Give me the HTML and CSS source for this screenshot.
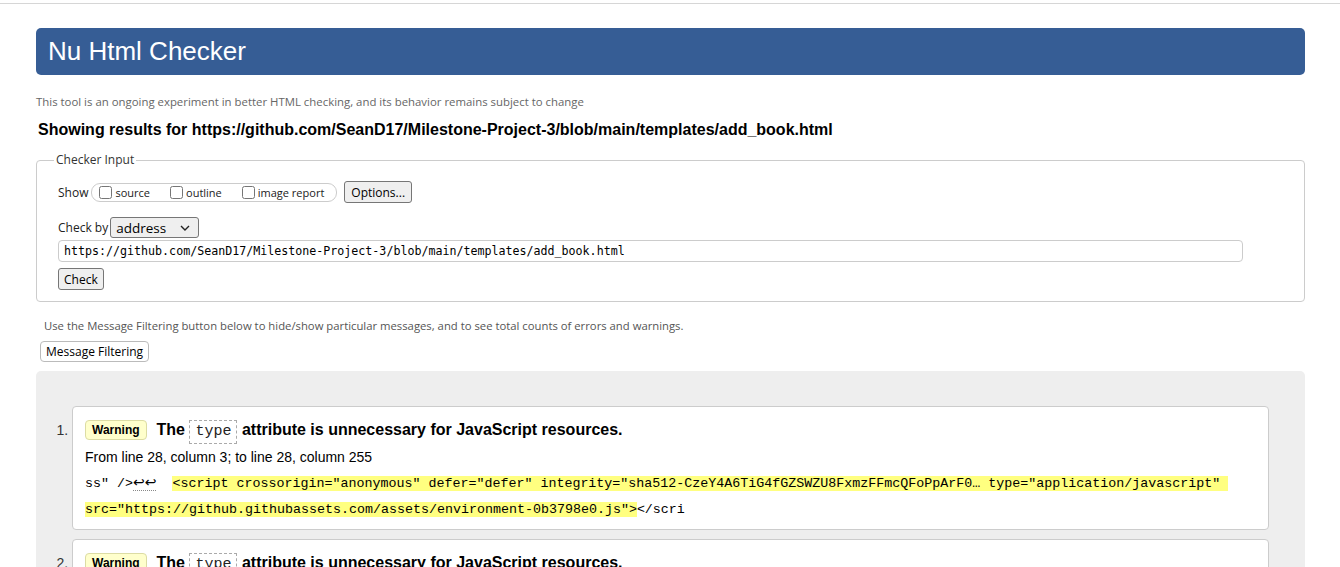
FILE: index.html
```html
<!DOCTYPE html>
<html lang="en">
<head>
<meta charset="utf-8">
<title>Showing results for https://github.com/SeanD17/Milestone-Project-3/blob/main/templates/add_book.html - Nu Html Checker</title>
<link rel="stylesheet" href="styles.css">
</head>
<body>
<div class="topline"></div>
<div class="page">
  <h1 class="title">Nu Html Checker</h1>
  <p class="about">This tool is an ongoing experiment in better HTML checking, and its behavior remains subject to change</p>
  <h2 class="results-for">Showing results for https://github.com/SeanD17/Milestone-Project-3/blob/main/templates/add_book.html</h2>
  <fieldset class="checker-input">
    <legend>Checker Input</legend>
    <div class="row show-row">
      <span class="lbl">Show</span>
      <span class="show-group">
        <label class="opt"><input type="checkbox"><span>source</span></label>
        <label class="opt"><input type="checkbox"><span>outline</span></label>
        <label class="opt"><input type="checkbox"><span>image report</span></label>
      </span>
      <button class="btn options-btn">Options...</button>
    </div>
    <div class="row checkby-row">
      <span class="lbl">Check by</span>
      <span class="select">
        <span class="select-text">address</span>
        <svg class="chev" width="10" height="6" viewBox="0 0 10 6"><path d="M1 1 L5 5 L9 1" fill="none" stroke="#222" stroke-width="1.4"/></svg>
      </span>
    </div>
    <div class="url">https://github.com/SeanD17/Milestone-Project-3/blob/main/templates/add_book.html</div>
    <button class="btn check-btn">Check</button>
  </fieldset>
  <p class="filter-hint">Use the Message Filtering button below to hide/show particular messages, and to see total counts of errors and warnings.</p>
  <button class="btn-filter">Message Filtering</button>
  <div class="results">
    <ol class="messages">
      <li class="msg">
        <p class="msg-head"><span class="badge">Warning</span><span class="msg-text">The <code class="kw">type</code> attribute is unnecessary for JavaScript resources.</span></p>
        <p class="loc">From line 28, column 3; to line 28, column 255</p>
        <p class="extract"><code>ss" /&gt;<span class="lf">↩↩</span>  <mark>&lt;script crossorigin="anonymous" defer="defer" integrity="sha512-CzeY4A6TiG4fGZSWZU8FxmzFFmcQFoPpArF0… type="application/javascript" src="https://github.githubassets.com/assets/environment-0b3798e0.js"&gt;</mark>&lt;/scri</code></p>
      </li>
      <li class="msg">
        <p class="msg-head"><span class="badge">Warning</span><span class="msg-text">The <code class="kw">type</code> attribute is unnecessary for JavaScript resources.</span></p>
        <p class="loc">From line 29, column 3; to line 29, column 249</p>
        <p class="extract"><code>s"&gt;&lt;/script&gt;<span class="lf">↩</span>  <mark>&lt;script crossorigin="anonymous" defer="defer" integrity="sha512-lbEoPNb7QHsz9Vb8RymBzQHmvqbwqH4Y… type="application/javascript" src="https://github.githubassets.com/assets/chunk-frameworks-2f1c9f55.js"&gt;</mark>&lt;/scri</code></p>
      </li>
    </ol>
  </div>
</div>
</body>
</html>
```
FILE: styles.css
```css
html {
  overflow: hidden;
}

body {
  margin: 0;
  background: #fff;
  color: #000;
  font-family: "Liberation Sans", Arial, sans-serif;
}

.topline {
  height: 1px;
  margin-top: 3px;
  background: #d6d6d6;
}

.page {
  padding: 0 35px 0 36px;
}

.title {
  margin: 24px 0 0;
  height: 47px;
  line-height: 47px;
  padding-left: 12px;
  background: #365d95;
  color: #fff;
  font-size: 26px;
  font-weight: normal;
  border-radius: 5px;
}

.about {
  margin: 19px 0 0;
  font-family: "Open Sans", sans-serif;
  font-size: 11.4px;
  line-height: 16px;
  color: #666;
}

.results-for {
  margin: 11px 0 0 2px;
  font-size: 16px;
  line-height: 18px;
  font-weight: bold;
}

.checker-input {
  margin: 13px 0 0;
  padding: 13px 10px 11px 21px;
  border: 1px solid #ccc;
  border-radius: 4px;
  min-width: 0;
}

.checker-input legend {
  margin-left: -4px;
  padding: 0 2px;
  font-family: "Open Sans", sans-serif;
  font-size: 12px;
  line-height: 16px;
  color: #333;
}

.row {
  display: flex;
  align-items: center;
}

.show-row {
  height: 22px;
}

.lbl {
  font-family: "Open Sans", sans-serif;
  font-size: 12px;
  color: #222;
}

.show-group {
  display: inline-flex;
  align-items: center;
  gap: 20px;
  box-sizing: border-box;
  height: 19px;
  margin-left: 3px;
  padding: 0 12px 0 7px;
  border: 1px solid #ccc;
  border-radius: 9px;
}

.opt {
  display: inline-flex;
  align-items: center;
  font-family: "Open Sans", sans-serif;
  font-size: 11px;
  color: #222;
}

.opt input {
  width: 13px;
  height: 13px;
  margin: 0 3px 0 0;
}

.btn {
  box-sizing: border-box;
  height: 22px;
  padding: 0 5px;
  background: #efefef;
  border: 1px solid #767676;
  border-radius: 3px;
  font-family: "Open Sans", sans-serif;
  font-size: 12px;
  color: #000;
}

.options-btn {
  margin-left: 7px;
  padding: 0 6px;
}

.checkby-row {
  margin-top: 14px;
  height: 21px;
}

.select {
  display: inline-flex;
  align-items: center;
  justify-content: space-between;
  box-sizing: border-box;
  width: 89px;
  height: 21px;
  margin-left: 2px;
  padding: 0 8px 0 5px;
  background: #efefef;
  border: 1px solid #767676;
  border-radius: 3px;
  font-family: "Open Sans", sans-serif;
  font-size: 13.5px;
}

.url {
  box-sizing: border-box;
  width: 1185px;
  height: 22px;
  margin-top: 2px;
  padding: 0 5px;
  border: 1px solid #ccc;
  border-radius: 4px;
  font-family: "DejaVu Sans Mono", monospace;
  font-size: 11.65px;
  line-height: 20px;
  color: #000;
}

.check-btn {
  display: block;
  margin-top: 6px;
}

.filter-hint {
  margin: 16px 0 0 8px;
  font-family: "Open Sans", sans-serif;
  font-size: 11.3px;
  line-height: 16px;
  color: #555;
}

.btn-filter {
  display: block;
  box-sizing: border-box;
  height: 21px;
  margin: 7px 0 0 4px;
  padding: 0 5px;
  background: #fff;
  border: 1px solid #bbb;
  border-radius: 4px;
  font-family: "Open Sans", sans-serif;
  font-size: 12px;
  color: #000;
}

.results {
  margin-top: 9px;
  padding: 35px 36px 20px 36px;
  background: #eee;
  border-radius: 5px 5px 0 0;
}

.messages {
  margin: 0;
  padding: 0;
  list-style: decimal outside;
}

.msg {
  margin-bottom: 9px;
  padding: 11px 12px 7px;
  background: #fff;
  border: 1px solid #ccc;
  border-radius: 4px;
  font-size: 14px;
}

.msg::marker {
  color: #333;
  font-size: 14px;
}

.msg-head {
  margin: 0;
  font-size: 16px;
  line-height: 24px;
  font-weight: bold;
}

.badge {
  display: inline-block;
  margin-right: 10px;
  padding: 0 6px;
  line-height: 18px;
  font-size: 12px;
  font-weight: bold;
  background: #ffffcc;
  border: 1px solid #dcdca4;
  border-radius: 4px;
  vertical-align: 1px;
}

.kw {
  display: inline-block;
  padding: 0 5px;
  line-height: 22px;
  border: 1px dashed #aaa;
  font-family: "Liberation Mono", "Courier New", monospace;
  font-size: 15px;
  font-weight: normal;
  color: #222;
}

.loc {
  margin: 3px 0 0;
  line-height: 20px;
}

.extract {
  margin: 3px 0 0;
  line-height: 25px;
}

.extract code {
  font-family: "Liberation Mono", "Courier New", monospace;
  font-size: 13.33px;
  white-space: pre-wrap;
}

.extract mark {
  background: #ffff80;
  color: inherit;
}

.lf {
  font-family: "DejaVu Sans", sans-serif;
  font-size: 14px;
  border-bottom: 1px dotted #888;
}
```
